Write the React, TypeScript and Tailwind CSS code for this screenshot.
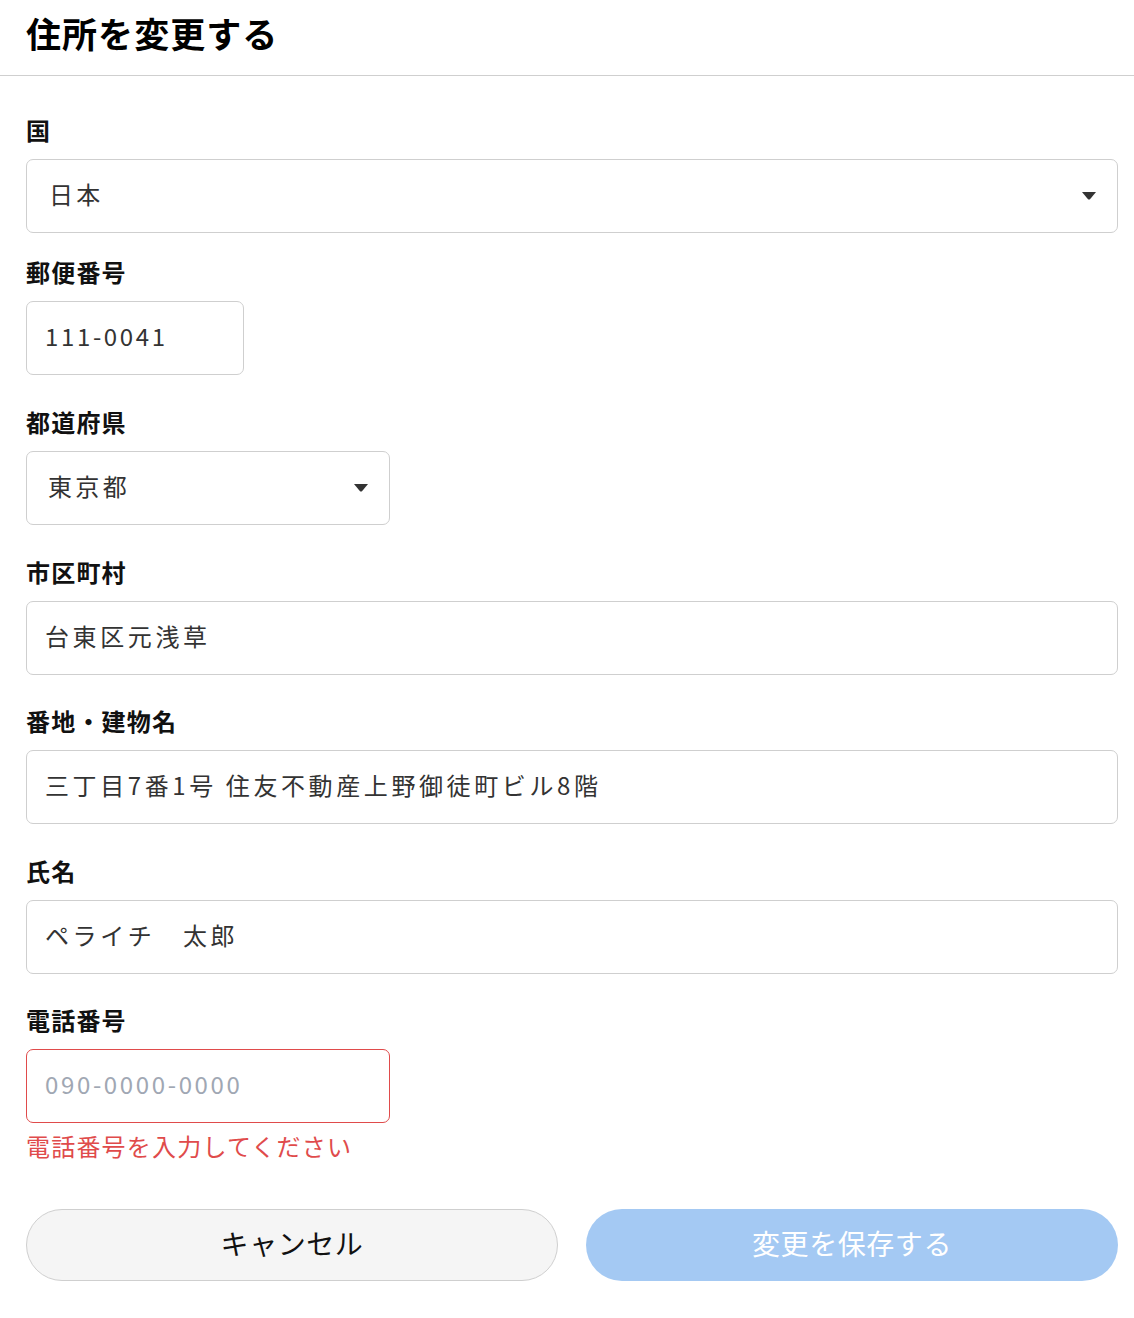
import React, { useState } from 'react';

const font = { fontFamily: '"Noto Sans CJK JP", "Noto Sans", sans-serif' };

function Caret() {
  return (
    <svg width="14" height="8" viewBox="0 0 14 8" className="shrink-0">
      <path d="M0 0 H14 L8 7.2 Q7 8 6 7.2 Z" fill="#333" />
    </svg>
  );
}

function Label({ children }: { children: React.ReactNode }) {
  return (
    <label className="block text-[24px] leading-[30px] font-bold text-[#111] tracking-[0.05em] mb-[14px]">
      {children}
    </label>
  );
}

function TextField({
  value,
  width = 'w-full',
  placeholder,
  error,
  numeric,
}: {
  value: string;
  width?: string;
  placeholder?: string;
  error?: boolean;
  numeric?: boolean;
}) {
  const [v, setV] = useState(value);
  return (
    <input
      value={v}
      placeholder={placeholder}
      onChange={(e) => setV(e.target.value)}
      className={`${width} h-[74px] pl-[18px] pr-[19px] pb-[5px] rounded-[7px] border bg-white text-[24px] text-[#333] outline-none placeholder:text-[#a0a7b3] ${
        numeric ? 'tracking-[0.11em]' : 'tracking-[0.15em]'
      } ${error ? 'border-[#e04b4b]' : 'border-[#cfcfcf]'}`}
      style={font}
    />
  );
}

function SelectField({ value, width = 'w-full', pad = 'pl-[22px]' }: { value: string; width?: string; pad?: string }) {
  return (
    <div className={`${width} h-[74px] ${pad} pr-[21px] rounded-[7px] border border-[#cfcfcf] bg-white flex items-center justify-between`}>
      <span className="text-[24px] text-[#333] tracking-[0.14em] -mt-[5px]">{value}</span>
      <Caret />
    </div>
  );
}

export default function App() {
  return (
    <div className="min-h-screen bg-white" style={font}>
      <div className="h-[76px] border-b border-[#cfcfcf] px-[26px] flex items-center">
        <h1 className="text-[35px] leading-none font-bold text-black tracking-[0.03em] -mt-[10px]">住所を変更する</h1>
      </div>

      <form className="pl-[26px] pr-[16px] pt-[39px]" onSubmit={(e) => e.preventDefault()}>
        <div>
          <Label>国</Label>
          <SelectField value="日本" />
        </div>

        <div className="mt-[24px]">
          <Label>郵便番号</Label>
          <TextField value="111-0041" width="w-[218px]" numeric />
        </div>

        <div className="mt-[32px]">
          <Label>都道府県</Label>
          <SelectField value="東京都" width="w-[364px]" pad="pl-[21px]" />
        </div>

        <div className="mt-[31.5px]">
          <Label>市区町村</Label>
          <TextField value="台東区元浅草" />
        </div>

        <div className="mt-[31.5px]">
          <Label>番地・建物名</Label>
          <TextField value="三丁目7番1号 住友不動産上野御徒町ビル8階" />
        </div>

        <div className="mt-[31.5px]">
          <Label>氏名</Label>
          <TextField value="ペライチ　太郎" />
        </div>

        <div className="mt-[31.5px]">
          <Label>電話番号</Label>
          <TextField value="" placeholder="090-0000-0000" width="w-[364px]" error numeric />
          <p className="mt-[6px] text-[24px] leading-[34px] text-[#e04b4b] tracking-[0.05em]">電話番号を入力してください</p>
        </div>

        <div className="mt-[46px] grid grid-cols-2 gap-[28px]">
          <button
            type="button"
            className="h-[72px] pb-[4px] rounded-full border border-[#cfcfcf] bg-[#f5f5f5] text-[28px] text-[#111] tracking-[0.02em]"
          >
            キャンセル
          </button>
          <button
            type="submit"
            disabled
            className="h-[72px] pb-[4px] rounded-full bg-[#a4c9f3] text-[28px] text-white tracking-[0.02em]"
          >
            変更を保存する
          </button>
        </div>
      </form>
    </div>
  );
}
